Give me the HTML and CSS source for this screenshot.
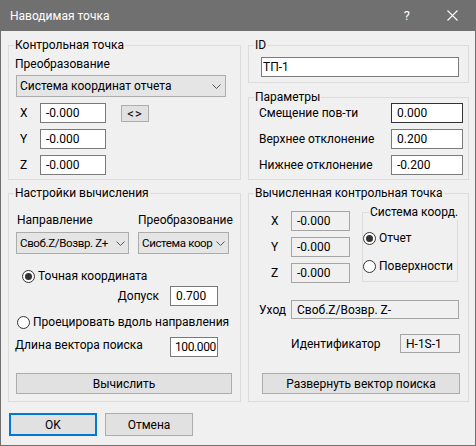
FILE: index.html
```html
<!DOCTYPE html>
<html lang="ru">
<head>
  <meta charset="UTF-8" />
  <title>Наводимая точка</title>
  <link rel="stylesheet" href="styles.css">
</head>
<body>
  <div class="window">
    <div class="titlebar">
      <span class="title">Наводимая точка</span>
      <span class="tb-help">?</span>
      <svg class="tb-close" width="11" height="11" viewBox="0 0 11 11">
        <path d="M0.5 0.5 L10.5 10.5 M10.5 0.5 L0.5 10.5" stroke="#fff" stroke-width="1.1" fill="none"/>
      </svg>
    </div>

    <div class="client">
      <div class="columns">
        <!-- left column -->
        <div class="col">
          <fieldset class="group g-control">
            <legend>Контрольная точка</legend>
            <div class="caption">Преобразование</div>
            <div class="combo combo-report">
              <span>Система координат отчета</span>
              <svg class="chevron" width="9" height="5" viewBox="0 0 9 5"><path d="M0.5 0.5 L4.5 4.5 L8.5 0.5" stroke="#555" fill="none"/></svg>
            </div>
            <div class="coord-list">
              <div class="coord-row">
                <span class="axis">X</span>
                <input class="edit edit-coord" value="-0.000">
                <button class="btn btn-swap">&lt;&gt;</button>
              </div>
              <div class="coord-row">
                <span class="axis">Y</span>
                <input class="edit edit-coord" value="-0.000">
              </div>
              <div class="coord-row">
                <span class="axis">Z</span>
                <input class="edit edit-coord" value="-0.000">
              </div>
            </div>
          </fieldset>

          <fieldset class="group g-settings">
            <legend>Настройки вычисления</legend>
            <div class="combo-grid">
              <span class="caption-sm first">Направление</span>
              <span class="caption-sm">Преобразование</span>
              <div class="combo">
                <span>Своб.Z/Возвр. Z+</span>
                <svg class="chevron" width="9" height="5" viewBox="0 0 9 5"><path d="M0.5 0.5 L4.5 4.5 L8.5 0.5" stroke="#555" fill="none"/></svg>
              </div>
              <div class="combo">
                <span>Система коор</span>
                <svg class="chevron" width="9" height="5" viewBox="0 0 9 5"><path d="M0.5 0.5 L4.5 4.5 L8.5 0.5" stroke="#555" fill="none"/></svg>
              </div>
            </div>

            <label class="radio-row exact"><span class="radio checked"></span>Точная координата</label>
            <div class="field-row tolerance">
              <span>Допуск</span>
              <input class="edit edit-short" value="0.700">
            </div>
            <label class="radio-row project"><span class="radio"></span>Проецировать вдоль направления</label>
            <div class="field-row search-len">
              <span>Длина вектора поиска</span>
              <input class="edit edit-short edit-tight" value="100.000">
            </div>
            <button class="btn btn-calc">Вычислить</button>
          </fieldset>
        </div>

        <!-- right column -->
        <div class="col">
          <fieldset class="group g-id">
            <legend>ID</legend>
            <input class="edit edit-id" value="ТП-1">
          </fieldset>

          <fieldset class="group g-params">
            <legend>Параметры</legend>
            <div class="param-row">
              <span>Смещение пов-ти</span>
              <input class="edit edit-param focused" value="0.000">
            </div>
            <div class="param-row">
              <span>Верхнее отклонение</span>
              <input class="edit edit-param" value="0.200">
            </div>
            <div class="param-row">
              <span>Нижнее отклонение</span>
              <input class="edit edit-param" value="-0.200">
            </div>
          </fieldset>

          <fieldset class="group g-result">
            <legend>Вычисленная контрольная точка</legend>
            <div class="result-top">
              <div class="coord-list result-coords">
                <div class="coord-row">
                  <span class="axis">X</span>
                  <input class="edit readonly edit-result" value="-0.000" readonly>
                </div>
                <div class="coord-row">
                  <span class="axis">Y</span>
                  <input class="edit readonly edit-result" value="-0.000" readonly>
                </div>
                <div class="coord-row">
                  <span class="axis">Z</span>
                  <input class="edit readonly edit-result" value="-0.000" readonly>
                </div>
              </div>
              <fieldset class="group g-system">
                <legend>Система коорд.</legend>
                <label class="radio-row report"><span class="radio checked"></span>Отчет</label>
                <label class="radio-row surface"><span class="radio"></span>Поверхности</label>
              </fieldset>
            </div>
            <div class="field-row departure">
              <span>Уход</span>
              <input class="edit readonly edit-departure" value="Своб.Z/Возвр. Z-" readonly>
            </div>
            <div class="field-row ident">
              <span>Идентификатор</span>
              <input class="edit readonly edit-ident" value="H-1S-1" readonly>
            </div>
            <button class="btn btn-expand">Развернуть вектор поиска</button>
          </fieldset>
        </div>
      </div>

      <div class="dialog-buttons">
        <button class="btn btn-dialog default">OK</button>
        <button class="btn btn-dialog">Отмена</button>
      </div>
    </div>
  </div>
</body>
</html>
```

FILE: styles.css
```css
:root {
  --face: #f0f0f0;
  --frame: #707070;
  --group-line: #dcdcdc;
  --btn-bg: #e1e1e1;
  --btn-border: #adadad;
  --edit-border: #7a7a7a;
  --accent: #0078d7;
  --font: Roboto, "Noto Sans", sans-serif;
}

* {
  box-sizing: border-box;
}

body {
  margin: 0;
  font-family: var(--font);
  font-size: 12px;
  line-height: 16px;
  color: #000;
  background: var(--face);
}

.window {
  width: 476px;
  height: 446px;
  border: 1px solid var(--frame);
  border-top: none;
  background: var(--face);
}

/* Title bar */
.titlebar {
  display: flex;
  align-items: center;
  height: 31px;
  margin: 0 -1px;
  padding-left: 10px;
  background: var(--frame);
  color: #fff;
}

.title {
  flex: 1;
  font-size: 12px;
}

.tb-help {
  margin-right: 37px;
  font-size: 13px;
}

.tb-close {
  margin-right: 18px;
}

/* Client area */
.client {
  padding: 6px 0 0 7px;
}

.columns {
  display: flex;
  gap: 7px;
}

.col {
  display: flex;
  flex-direction: column;
  gap: 6px;
}

.col:first-child {
  width: 233px;
}

.col:last-child {
  width: 221px;
}

/* Group boxes */
.group {
  margin: 0;
  padding: 0;
  min-width: 0;
  border: 1px solid var(--group-line);
}

.group legend {
  margin-left: 5px;
  padding: 0 1px;
  line-height: 16px;
}

.g-control { height: 143px; }
.g-settings { height: 217px; margin-top: -1px; }
.g-id { height: 46px; }
.g-params { height: 91px; }
.g-result { height: 217px; margin-top: -1px; }

.caption {
  margin: 3px 0 0 6px;
}

/* Combo boxes */
.combo {
  display: flex;
  align-items: center;
  height: 22px;
  padding: 0 4px 0 3px;
  background: #e5e5e5;
  border: 1px solid #acacac;
  white-space: nowrap;
}

.combo span {
  flex: 1;
  min-width: 0;
  overflow: hidden;
}

.combo .chevron {
  flex: none;
  margin-left: 3px;
}

.combo-report {
  width: 210px;
  margin: 3px 0 0 7px;
}

.combo-grid {
  display: grid;
  grid-template-columns: 113px 91px;
  column-gap: 9px;
  row-gap: 4px;
  margin: 11px 0 0 7px;
}

.combo-grid .combo {
  padding-right: 3px;
}

.combo-grid .combo span {
  font-size: 11.5px;
  letter-spacing: -0.35px;
}

.caption-sm.first {
  padding-left: 1px;
}

/* Edits */
.edit {
  height: 20px;
  margin: 0;
  padding: 0 0 0 5px;
  font: inherit;
  color: #000;
  background: #fff;
  border: 1px solid var(--edit-border);
  outline: none;
}

.edit.readonly {
  background: var(--face);
  border-color: #a5a5a5;
}

.edit.focused {
  border-color: #333;
}

.edit-tight {
  padding-left: 4px;
  letter-spacing: -0.4px;
}

.coord-list {
  display: flex;
  flex-direction: column;
  gap: 6px;
  margin: 6px 0 0 11px;
}

.coord-row {
  display: flex;
  align-items: flex-start;
}

.axis {
  width: 20px;
  line-height: 20px;
}

.edit-coord { width: 66px; }

/* Buttons */
.btn {
  margin: 0;
  padding: 0;
  font: inherit;
  color: #000;
  background: var(--btn-bg);
  border: 1px solid var(--btn-border);
}

.btn-swap {
  width: 28px;
  height: 17px;
  margin: 2px 0 0 15px;
  font-size: 13px;
  line-height: 14px;
  letter-spacing: 1px;
}

.btn-calc {
  display: block;
  width: 216px;
  height: 21px;
  margin: 16px 0 0 7px;
}

.btn-expand {
  display: block;
  width: 198px;
  height: 21px;
  margin: 20px 0 0 13px;
}

/* Radio buttons */
.radio-row {
  display: flex;
  align-items: center;
  gap: 3px;
  height: 16px;
  white-space: nowrap;
}

.radio {
  flex: none;
  position: relative;
  width: 13px;
  height: 13px;
  border: 1px solid #333;
  border-radius: 50%;
  background: #fff;
}

.radio.checked::after {
  content: "";
  position: absolute;
  left: 2px;
  top: 2px;
  width: 7px;
  height: 7px;
  border-radius: 50%;
  background: #333;
}

.radio-row.exact { margin: 14px 0 0 13px; }
.radio-row.project { margin: 8px 0 0 8px; }

/* Label + edit rows */
.field-row {
  display: flex;
  align-items: center;
}

.field-row input {
  margin-left: auto;
}

.edit-short { width: 48px; }

.tolerance {
  justify-content: flex-end;
  gap: 11px;
  margin-top: 2px;
  padding-right: 22px;
}

.tolerance input {
  margin-left: 0;
}

.search-len {
  align-items: flex-start;
  margin: 7px 0 0 6px;
  padding-right: 22px;
}

/* Right column */
.edit-id {
  display: block;
  width: 198px;
  margin: 4px 0 0 12px;
  padding-left: 1px;
}

.param-row {
  display: flex;
  align-items: center;
  margin: 0 5px 6px 10px;
}

.param-row:first-of-type {
  margin-top: -2px;
}

.param-row span {
  flex: 1;
}

.edit-param { width: 72px; }

.result-top {
  display: flex;
  align-items: flex-start;
  margin-top: 3px;
}

.result-coords {
  margin: 7px 0 0 22px;
}

.edit-result { width: 59px; }

.g-system {
  width: 96px;
  height: 78px;
  margin-left: 12px;
}

.g-system legend {
  margin-left: 6px;
  white-space: nowrap;
}

.radio-row.report { margin-top: 10px; }
.radio-row.surface { margin-top: 12px; }

.departure {
  margin: 17px 9px 0 10px;
}

.edit-departure {
  width: 168px;
  height: 19px;
}

.ident {
  margin: 15px 8px 0 42px;
}

.edit-ident {
  width: 60px;
  height: 19px;
}

/* Dialog buttons */
.dialog-buttons {
  display: flex;
  gap: 8px;
  margin: 11px 0 0 1px;
}

.btn-dialog {
  width: 88px;
  height: 23px;
}

.btn-dialog.default {
  border: 2px solid var(--accent);
}
```
